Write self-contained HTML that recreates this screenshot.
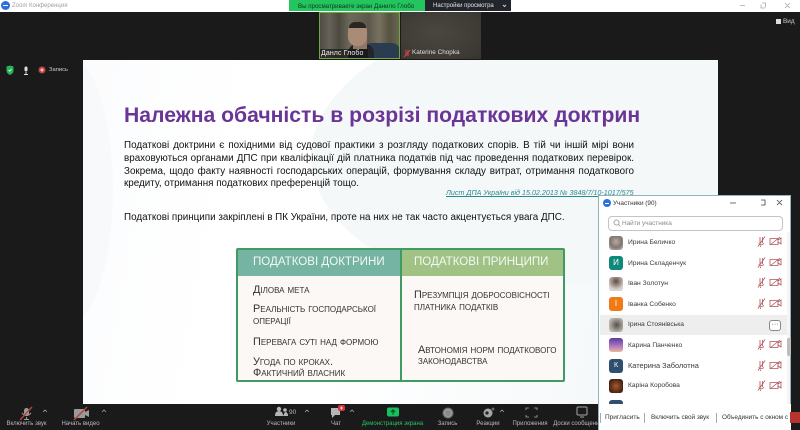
<!DOCTYPE html>
<html lang="uk">
<head>
<meta charset="utf-8">
<title>Zoom</title>
<style>
html,body{margin:0;padding:0;width:800px;height:430px;overflow:hidden;background:#1a1a1a;font-family:"Liberation Sans","DejaVu Sans",sans-serif}
div,span{position:absolute;white-space:nowrap;box-sizing:border-box}
svg{position:absolute;overflow:visible}
.j{left:124px;width:510px;font-size:9.85px;line-height:13px;color:#111;text-align:justify;text-align-last:justify}
.t{font-size:6px;color:#b9b9b9;top:420px;line-height:9px;transform:translateX(-50%)}
.c{font-size:10.9px;font-variant:small-caps;color:#333;line-height:11px}
.n{left:628px;font-size:6.7px;color:#3a3a3a;line-height:10px}
.a{left:609px;width:14px;height:14px;border-radius:3px}
</style>
</head>
<body>
<!-- title bar -->
<div style="left:0;top:0;width:800px;height:12px;background:#fff"></div>
<div style="left:1px;top:1px;width:9px;height:9px;border-radius:50%;background:#2d6fe0"></div>
<div style="left:3px;top:5px;width:5px;height:1px;background:#fff"></div>
<div style="left:12px;top:1.500px;font-size:6px;line-height:9px;color:#9f9f9f">Zoom Конференция</div>
<div style="left:289px;top:0;width:136px;height:11px;background:#23c55e"></div>
<div style="left:298px;top:1.500px;font-size:6.150px;line-height:9px;color:#10351e">Вы просматриваете экран Данило Глобо</div>
<div style="left:425px;top:0;width:86px;height:11px;background:#23252d"></div>
<div style="left:433px;top:1.500px;font-size:6px;line-height:9px;color:#e6e6e6">Настройки просмотра</div>
<svg style="left:0;top:0" width="800" height="12"><path d="M503 5l1.500 1.500L506 5" stroke="#ccc" fill="none"/><path d="M740 5.500h5M762 3h3.500v4.500M761 4.500v3.500h4M785 3l5 5M790 3l-5 5" stroke="#a8a8a8" fill="none" stroke-width=".8"/></svg>

<!-- video thumbnails -->
<div style="left:319px;top:12px;width:81px;height:47px;background:linear-gradient(90deg,#4f4c42 0,#66625a 12%,#4c493f 24%,#6d695c 38%,#5c584c 62%,#777260 75%,#55523f 88%,#6a6654 100%);border:1px solid #6ea83e;overflow:hidden">
  <div style="left:44px;top:30px;width:36px;height:18px;background:#2c3c50;border-radius:8px 8px 0 0"></div>
  <div style="left:28px;top:31px;width:26px;height:16px;background:#24242a;border-radius:9px 9px 0 0"></div>
  <div style="left:33px;top:26px;width:14px;height:10px;background:#8e7766"></div>
  <div style="left:28px;top:10px;width:19px;height:23px;background:#a98b78;border-radius:8px 8px 9px 9px"></div>
  <div style="left:29px;top:9px;width:17px;height:6px;background:#2a2622;border-radius:7px 7px 0 0"></div>
  <div style="left:0;top:36px;width:48px;height:10px;background:rgba(20,20,20,.65)"></div>
  <div style="left:1px;top:36px;font-size:7px;line-height:10px;color:#eee;letter-spacing:.1px">Данлс Глобо</div>
</div>
<div style="left:401px;top:12px;width:80px;height:47px;background:radial-gradient(ellipse at 45% 45%,#4a473f 0,#3f3d36 60%,#37352f 100%)"></div>
<svg style="left:403px;top:49px" width="8" height="9"><path d="M3 1v4M5 1v4M2 6h4M1 8l6-7" stroke="#c8423e" fill="none" stroke-width="1.200"/></svg>
<div style="left:412px;top:48px;font-size:6.400px;line-height:10px;color:#ddd">Katerine Chopka</div>

<!-- view -->
<div style="left:776px;top:19px;width:5px;height:5px;background:#ddd"></div>
<div style="left:783px;top:17px;font-size:6.400px;line-height:9px;color:#ccc">Вид</div>

<!-- status icons -->
<svg style="left:6px;top:65px" width="60" height="11"><path d="M0.500 1.500l3.500-1 3.500 1v4q0 3-3.500 4.500Q.5 8.500.5 5.500z" fill="#26b35a"/><path d="M2.500 5l1.200 1.200L5.500 4" stroke="#fff" fill="none" stroke-width=".8"/><rect x="18.500" y="1.500" width="3" height="5" rx="1.500" fill="#ddd"/><path d="M20 7v2M18 9.500h4" stroke="#ddd"/><circle cx="36" cy="5" r="3.500" fill="#c8423e"/><circle cx="36" cy="5" r="1.500" fill="#ecc"/></svg>
<div style="left:49px;top:65px;font-size:5.800px;line-height:10px;color:#ccc">Запись</div>

<!-- slide -->
<div style="left:83px;top:60px;width:635px;height:344px;background:linear-gradient(100deg,#fbfcfd 0,#ffffff 25%,#ffffff 42%,#f2f6f8 100%);overflow:hidden">
  <div style="left:230px;top:-50px;width:460px;height:280px;background:#f5f8f9;border-radius:40% 0 0 60%;transform:rotate(-12deg)"></div>
  <div style="left:-70px;top:-10px;width:100px;height:280px;background:#f7f9fb;border-radius:50%"></div>
</div>
<div id="title" style="left:124px;top:103px;font-size:21.170px;line-height:25px;font-weight:bold;color:#6a3596">Належна обачність в розрізі податкових доктрин</div>
<div class="j" style="top:139px">Податкові доктрини є похідними від судової практики з розгляду податкових спорів. В тій чи іншій мірі вони</div>
<div class="j" style="top:151.500px">враховуються органами ДПС при кваліфікації дій платника податків під час проведення податкових перевірок.</div>
<div class="j" style="top:164.500px">Зокрема, щодо факту наявності господарських операцій, формування складу витрат, отримання податкового</div>
<div class="j" style="top:177px;width:auto;text-align:left;text-align-last:left">кредиту, отримання податкових преференцій тощо.</div>
<div style="left:446px;top:188px;width:190px;font-size:7.170px;line-height:10px;color:#2b8a8f;text-decoration:underline;white-space:nowrap;font-style:italic">Лист ДПА України від 15.02.2013 № 3848/7/10-1017/575</div>
<div class="j" style="top:211px;width:auto;text-align:left;text-align-last:left">Податкові принципи закріплені в ПК України, проте на них не так часто акцентується увага ДПС.</div>

<!-- table -->
<div style="left:236px;top:248px;width:329px;height:134px;background:#fbf8f5;border:2px solid #3f9a63;border-radius:2px"></div>
<div style="left:238px;top:250px;width:163px;height:26px;background:#75b4a2"></div>
<div style="left:402px;top:250px;width:161px;height:26px;background:#a0c284"></div>
<div style="left:400px;top:249px;width:2px;height:132px;background:#3f9a63"></div>
<div style="left:253px;top:254px;font-size:11.550px;line-height:16px;color:#f3f8f4">ПОДАТКОВІ ДОКТРИНИ</div>
<div style="left:414px;top:254px;font-size:11.550px;line-height:16px;color:#f3f8f4">ПОДАТКОВІ ПРИНЦИПИ</div>
<div class="c" style="left:253px;top:285px">Ділова мета</div>
<div class="c" style="left:253px;top:304px">Реальність господарської</div>
<div class="c" style="left:253px;top:316px">операції</div>
<div class="c" style="left:253px;top:337px">Перевага суті над формою</div>
<div class="c" style="left:253px;top:357px">Угода по кроках.</div>
<div class="c" style="left:253px;top:368px">Фактичний власник</div>
<div class="c" style="left:414px;top:290px">Презумпція добросовісності</div>
<div class="c" style="left:414px;top:302px">платника податків</div>
<div class="c" style="left:418px;top:345px">Автономія норм податкового</div>
<div class="c" style="left:418px;top:356px">законодавства</div>

<!-- participants panel -->
<div style="left:598px;top:195px;width:193px;height:235px;background:#fff;border:1px solid #8fb5bb;border-bottom:0"></div>
<div style="left:603px;top:199px;width:8px;height:8px;border-radius:50%;background:#2d6fe0"></div>
<div style="left:605px;top:203px;width:4px;height:1px;background:#fff"></div>
<div style="left:613px;top:198.500px;font-size:6.400px;line-height:9px;color:#333">Участники (90)</div>
<svg style="left:600px;top:197px" width="190" height="12"><path d="M130 6h6M161 3h4v5h-4M177 3l5 5M182 3l-5 5" stroke="#444" fill="none" stroke-width=".8"/></svg>
<div style="left:608px;top:216px;width:175px;height:15px;border:1px solid #c4c4c4;border-radius:4px;background:#fff"></div>
<svg style="left:613px;top:219px" width="8" height="8"><circle cx="3.500" cy="3.500" r="2.600" fill="none" stroke="#999" stroke-width=".8"/><path d="M5.500 5.500l2 2" stroke="#999" stroke-width=".8"/></svg>
<div style="left:622px;top:218.500px;font-size:6.400px;line-height:10px;color:#8a8a8a">Найти участника</div>

<div style="left:600px;top:315px;width:187px;height:20px;background:#eeeeee"></div>
<div style="left:769px;top:320px;width:12px;height:11px;background:#fff;border:1px solid #888;border-radius:3px;font-size:7px;line-height:7px;text-align:center;color:#444">···</div>
<div style="left:787px;top:232px;width:3px;height:172px;background:#f5f5f5"></div>
<div style="left:787px;top:338px;width:4px;height:18px;background:#bdbdbd;border-radius:2px"></div>

<div class="a" style="top:236px;background:radial-gradient(circle at 50% 40%,#b8a9a0 0,#7f7570 55%,#c8c8c8 100%)"></div>
<div class="n" style="top:238px">Ирина Беличко</div>
<div class="a" style="top:256px;background:#0f8a7a;color:#fff;font-size:8px;line-height:14px;text-align:center">И</div>
<div class="n" style="top:258.500px">Ирина Складенчук</div>
<div class="a" style="top:277px;background:radial-gradient(circle at 50% 30%,#5a4a40 0,#d9d2cc 70%)"></div>
<div class="n" style="top:279px">Іван Золотун</div>
<div class="a" style="top:297px;background:#f07a16;color:#fff;font-size:8px;line-height:14px;text-align:center">І</div>
<div class="n" style="top:299.500px">Іванка Собенко</div>
<div class="a" style="top:318px;background:radial-gradient(circle at 55% 50%,#54504a 0,#a8a49c 60%,#d8d6d0 100%)"></div>
<div class="n" style="top:320px">Ірина Стоянівська</div>
<div class="a" style="top:338px;background:linear-gradient(180deg,#5a3a96 0,#a070c0 50%,#efb4a0 100%)"></div>
<div class="n" style="top:340.500px">Карина Панченко</div>
<div class="a" style="top:359px;background:#2f4f6f;color:#fff;font-size:7px;line-height:14px;text-align:center">К</div>
<div class="n" style="top:361px;font-size:7.400px">Катерина Заболотна</div>
<div class="a" style="top:379px;background:radial-gradient(circle at 50% 50%,#a85a30 0,#4a2415 70%)"></div>
<div class="n" style="top:381px">Каріна Коробова</div>
<div class="a" style="top:400px;height:4px;background:#2f4f6f;border-radius:3px 3px 0 0"></div>

<svg style="left:755px;top:234px" width="30" height="170" fill="none" stroke="#b0525a" stroke-width=".8">
  <g id="m"><path d="M5 3v6M7.500 3v6M3.500 9.500q2.500 2 5.500 0M5.500 11.500v1.500M3 12.500l7-10"/><path d="M15 4.500h8v6h-8zM23 6l3-2v6l-3-2M15 11l10-8"/></g>
  <use href="#m" y="21"/><use href="#m" y="41"/><use href="#m" y="62"/><use href="#m" y="103"/><use href="#m" y="124"/><use href="#m" y="144"/>
</svg>

<!-- toolbar -->
<svg style="left:0;top:405px" width="600" height="25">
  <rect x="24" y="3" width="5" height="8" rx="2.500" fill="#9a9a9a"/>
  <path d="M22 8q4.500 5 9 0M26.500 12v2M24 14.500h5" stroke="#9a9a9a" fill="none"/>
  <path d="M20 15L32 2" stroke="#b8423e" stroke-width="1.400"/>
  <path d="M43 7l2-2 2 2M102 7l2-2 2 2M305 7l2-2 2 2M350 7l2-2 2 2M500 7l2-2 2 2" stroke="#999" fill="none" stroke-width=".8"/>
  <rect x="74" y="4" width="11" height="9" rx="1" fill="#9a9a9a"/><path d="M85 7l4-2v7l-4-2z" fill="#9a9a9a"/><path d="M74 15L87 2" stroke="#b8423e" stroke-width="1.400"/>
  <circle cx="279" cy="4" r="2.200" fill="#b5b5b5"/><path d="M275 11q0-5 4-5t4 5z" fill="#b5b5b5"/><circle cx="285" cy="5" r="1.800" fill="#b5b5b5"/><path d="M283 11h5q0-4-3-4z" fill="#b5b5b5"/>
  <path d="M331 3h9v7h-5l-3 3v-3h-1z" fill="#b5b5b5"/><rect x="338" y="0" width="7" height="6" rx="2" fill="#d8343a"/><path d="M341.500 1.500v3M340 3h3" stroke="#fff" stroke-width=".7"/>
  <rect x="387" y="2.500" width="12" height="9" rx="2" fill="#16c05c"/><path d="M393 9.500v-4M391 7l2-2 2 2" stroke="#0a3a20" fill="none"/>
  <circle cx="448" cy="8" r="5" fill="#9a9a9a" stroke="#666" stroke-width="1"/><circle cx="448" cy="8" r="3" fill="#8a8a8a"/>
  <circle cx="488" cy="8" r="4.500" fill="#a5a5a5"/><circle cx="487" cy="8" r="1.600" fill="#222"/><path d="M493 2.500v3M491.500 4h3" stroke="#a5a5a5" stroke-width=".7"/>
  <path d="M526 5V3h3M534 3h3v2M526 10v2h3M534 12h3v-2" stroke="#a5a5a5" fill="none" stroke-width=".8"/>
  <rect x="577" y="2" width="10" height="8" rx="1" stroke="#a5a5a5" fill="none"/><path d="M580 12h4" stroke="#a5a5a5"/>
</svg>
<div style="left:289px;top:408px;font-size:6.500px;line-height:9px;color:#b5b5b5">90</div>
<div class="t" style="left:26.500px">Включить звук</div>
<div class="t" style="left:80.500px">Начать видео</div>
<div class="t" style="left:281px">Участники</div>
<div class="t" style="left:336px">Чат</div>
<div class="t" style="left:392.500px;color:#27c468">Демонстрация экрана</div>
<div class="t" style="left:447.500px">Запись</div>
<div class="t" style="left:488px">Реакции</div>
<div class="t" style="left:530px">Приложения</div>
<div class="t" style="left:578px">Доски сообщений</div>

<!-- panel footer -->
<div style="left:598px;top:404px;width:193px;height:26px;background:#fff;border-left:1px solid #8fb5bb"></div>
<div style="left:605px;top:413px;font-size:6.500px;line-height:10px;color:#333">Пригласить</div>
<div style="left:651px;top:413px;font-size:6.400px;line-height:10px;color:#333">Включить свой звук</div>
<div style="left:722px;top:413px;width:66px;overflow:hidden;font-size:6.400px;line-height:10px;color:#333">Объединить с окном с</div>
<div style="left:600px;top:413px;width:1px;height:10px;background:#aaa"></div>
<div style="left:644px;top:413px;width:1px;height:10px;background:#aaa"></div>
<div style="left:716px;top:413px;width:1px;height:10px;background:#aaa"></div>
<div style="left:790px;top:412px;width:10px;height:11px;background:#b8322e"></div>
</body>
</html>
